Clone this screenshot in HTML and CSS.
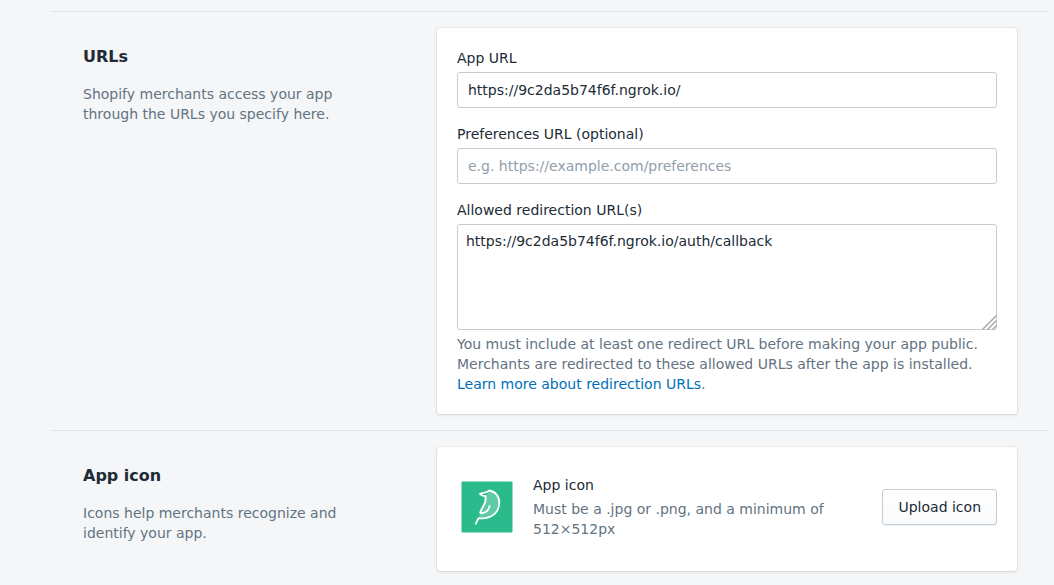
FILE: index.html
```html
<!DOCTYPE html>
<html lang="en">
<head>
<meta charset="utf-8">
<meta name="viewport" content="width=device-width, initial-scale=1">
<title>App setup</title>
<link rel="stylesheet" href="styles.css">
</head>
<body>
<main class="page">
  <section class="section">
    <div class="annotation">
      <h2 class="heading">URLs</h2>
      <p class="subdued">Shopify merchants access your app through the URLs you specify here.</p>
    </div>
    <form class="card form">
      <div class="field">
        <label for="app-url">App URL</label>
        <input class="input" id="app-url" type="text" value="https://9c2da5b74f6f.ngrok.io/">
      </div>
      <div class="field">
        <label for="preferences-url">Preferences URL (optional)</label>
        <input class="input" id="preferences-url" type="text" placeholder="e.g. https://example.com/preferences">
      </div>
      <div class="field">
        <label for="redirect-urls">Allowed redirection URL(s)</label>
        <div class="textarea-wrap">
          <textarea class="textarea" id="redirect-urls" spellcheck="false" aria-describedby="redirect-help">https://9c2da5b74f6f.ngrok.io/auth/callback</textarea>
          <svg class="grip" viewBox="0 0 15 15" aria-hidden="true"><path d="M0.5 14.5 14.5 0.5M5.5 14.5 14.5 5.5M10.5 14.5 14.5 10.5"/></svg>
        </div>
        <p class="subdued" id="redirect-help">You must include at least one redirect URL before making your app public. Merchants are redirected to these allowed URLs after the app is installed. <a class="link" href="#redirection">Learn more about redirection URLs</a>.</p>
      </div>
    </form>
  </section>
  <section class="section">
    <div class="annotation">
      <h2 class="heading">App icon</h2>
      <p class="subdued">Icons help merchants recognize and identify your app.</p>
    </div>
    <div class="card media">
      <svg class="app-icon" viewBox="0 0 60 60" role="img" aria-label="App icon">
        <rect x="4.5" y="4.5" width="51" height="51" rx="1" fill="#2bba8b"/>
        <path fill="#5fcba6" d="M28.700 18.700 32.300 13.500C38 14.500 42.300 19 42.300 25.500C42.300 34 36.500 41 26 41.300H21.500L23 36.200 28.300 24.500Z"/>
        <path class="leaf-line" d="M23 36.200C24 32 28.300 27 28.500 23.500V19C26.500 19.300 24.500 18.500 22.900 16.900C25.500 15 29 16.700 32 13.500C38 14.300 42.300 19 42.300 25.500C42.300 34 36.500 41 26 41.300H21.300L18.500 47.500M23 36.200C29 36.500 31.800 33 32.700 28.500"/>
      </svg>
      <div class="field media-text">
        <p>App icon</p>
        <p class="subdued">Must be a .jpg or .png, and a minimum of 512×512px</p>
      </div>
      <button class="button" type="button">Upload icon</button>
    </div>
  </section>
</main>
</body>
</html>
```
FILE: styles.css
```css
* {
  box-sizing: border-box;
}

body {
  margin: 0;
  background: #f4f6f8;
  color: #212b36;
  font: 14px/20px "DejaVu Sans", sans-serif;
}

h2,
p {
  margin: 0;
}

.page {
  padding: 11px 5px 0 51px;
}

.section {
  display: grid;
  grid-template-columns: 1fr 2fr;
  gap: 64px;
  padding: 16px 32px;
  border-top: 1px solid #dfe3e8;
}

.annotation {
  display: flex;
  flex-direction: column;
  gap: 14px;
  padding-top: 16px;
}

.heading {
  font-size: 16px;
  line-height: 26px;
  font-weight: 700;
}

.subdued {
  color: #637381;
}

.card {
  background: #fff;
  border-radius: 3px;
  box-shadow: 0 0 0 1px rgba(63, 63, 68, 0.05), 0 1px 3px 0 rgba(63, 63, 68, 0.15);
}

.form {
  display: flex;
  flex-direction: column;
  gap: 16px;
  padding: 20px;
}

.field {
  display: flex;
  flex-direction: column;
  gap: 4px;
}

.input,
.textarea {
  display: block;
  width: 100%;
  border: 1px solid #c4cdd5;
  border-radius: 3px;
  background: #fff;
  color: #212b36;
  font: inherit;
}

.input {
  height: 36px;
  padding: 0 10px;
}

.input::placeholder {
  color: #919eab;
  opacity: 1;
}

.textarea-wrap {
  position: relative;
}

.textarea {
  height: 106px;
  padding: 6px 8px;
  resize: none;
}

.grip {
  position: absolute;
  right: 0;
  bottom: 0;
  width: 15px;
  height: 15px;
  fill: none;
  stroke: #aaa;
  stroke-width: 1.5;
  pointer-events: none;
}

.link {
  color: #006fbb;
  text-decoration: none;
}

.media {
  display: flex;
  align-items: center;
  gap: 16px;
  padding: 28px 20px 32px;
}

.app-icon {
  flex: none;
  width: 60px;
  height: 60px;
}

.leaf-line {
  fill: none;
  stroke: #fff;
  stroke-width: 1.8;
  stroke-linejoin: round;
}

.media-text {
  flex: 1;
}

.button {
  height: 36px;
  padding: 0 15px;
  border: 1px solid #c4cdd5;
  border-radius: 3px;
  background: linear-gradient(to bottom, #fff, #f9fafb);
  box-shadow: 0 1px 0 0 rgba(22, 29, 37, 0.05);
  color: #212b36;
  font: inherit;
  white-space: nowrap;
}
```
